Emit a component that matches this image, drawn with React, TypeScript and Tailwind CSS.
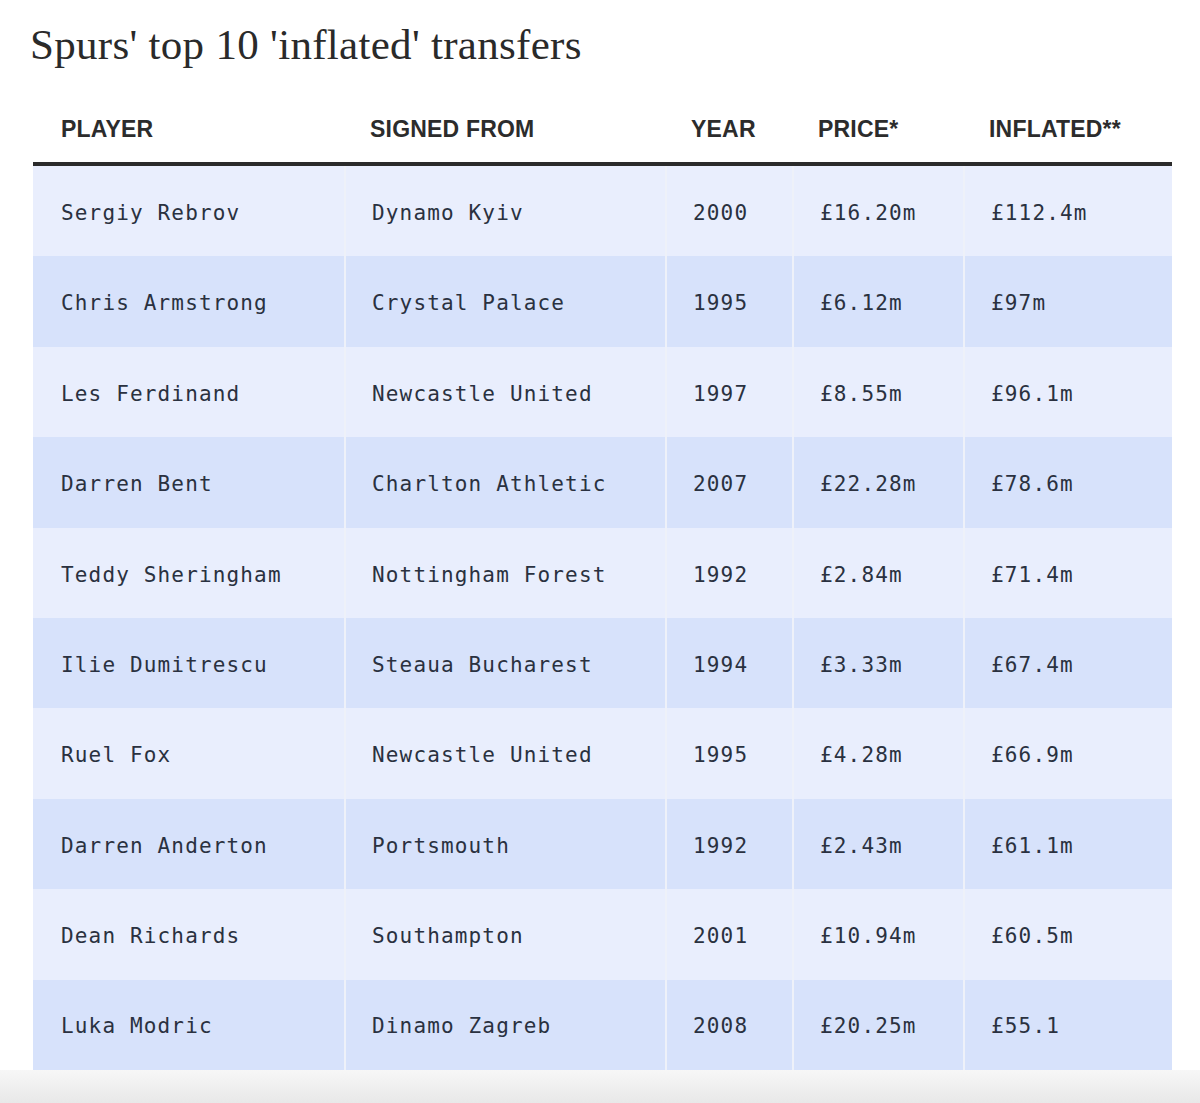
// App.tsx — Spurs' top 10 'inflated' transfers table

interface Transfer {
  player: string;
  from: string;
  year: string;
  price: string;
  inflated: string;
}

const transfers: Transfer[] = [
  { player: "Sergiy Rebrov", from: "Dynamo Kyiv", year: "2000", price: "£16.20m", inflated: "£112.4m" },
  { player: "Chris Armstrong", from: "Crystal Palace", year: "1995", price: "£6.12m", inflated: "£97m" },
  { player: "Les Ferdinand", from: "Newcastle United", year: "1997", price: "£8.55m", inflated: "£96.1m" },
  { player: "Darren Bent", from: "Charlton Athletic", year: "2007", price: "£22.28m", inflated: "£78.6m" },
  { player: "Teddy Sheringham", from: "Nottingham Forest", year: "1992", price: "£2.84m", inflated: "£71.4m" },
  { player: "Ilie Dumitrescu", from: "Steaua Bucharest", year: "1994", price: "£3.33m", inflated: "£67.4m" },
  { player: "Ruel Fox", from: "Newcastle United", year: "1995", price: "£4.28m", inflated: "£66.9m" },
  { player: "Darren Anderton", from: "Portsmouth", year: "1992", price: "£2.43m", inflated: "£61.1m" },
  { player: "Dean Richards", from: "Southampton", year: "2001", price: "£10.94m", inflated: "£60.5m" },
  { player: "Luka Modric", from: "Dinamo Zagreb", year: "2008", price: "£20.25m", inflated: "£55.1" },
];

const headers = ["PLAYER", "SIGNED FROM", "YEAR", "PRICE*", "INFLATED**"];

// columnas: 311 / 321 / 127 / 171 / 209
const gridCols = "grid grid-cols-[311px_321px_127px_171px_209px]";

function Cell({ children, first }: { children: React.ReactNode; first?: boolean }) {
  return (
    <div
      className={
        first
          ? "flex items-center h-full pl-[28px] pt-[5px]"
          : "flex items-center h-full pl-[26px] pt-[5px] border-l-2 border-[#eef1f9]"
      }
    >
      {children}
    </div>
  );
}

export default function App() {
  return (
    <div className="w-[1200px] h-[1103px] bg-white flex flex-col overflow-hidden">
      {/* ── Título ───────────────────────────── */}
      <h1
        className="pl-[30px] pt-[19px] h-[100px] text-[43px] leading-[52px] tracking-[0.3px] text-[#2a2a2a]"
        style={{ fontFamily: '"Liberation Serif", "Times New Roman", serif' }}
      >
        Spurs' top 10 'inflated' transfers
      </h1>

      <div className="pl-[33px] w-[1172px]">
        {/* ── Encabezado ───────────────────────── */}
        <div
          className={`${gridCols} h-[66px] border-b-4 border-[#2b2b2b] text-[23px] font-semibold text-[#2c2c2c] tracking-[0.2px]`}
          style={{ fontFamily: '"Liberation Sans", Arial, sans-serif' }}
        >
          {headers.map((h, i) => (
            <div key={h} className={i === 0 ? "pl-[28px] pt-[12px]" : "pl-[26px] pt-[12px]"}>
              {h}
            </div>
          ))}
        </div>

        {/* ── Filas ────────────────────────────── */}
        <div
          className="text-[21px] text-[#2a3140] tracking-[1.15px]"
          style={{ fontFamily: '"DejaVu Sans Mono", "Liberation Mono", monospace' }}
        >
          {transfers.map((t, i) => (
            <div
              key={t.player}
              className={`${gridCols} h-[90.4px] ${i % 2 === 0 ? "bg-[#e9eefd]" : "bg-[#d7e2fb]"}`}
            >
              <Cell first>{t.player}</Cell>
              <Cell>{t.from}</Cell>
              <Cell>{t.year}</Cell>
              <Cell>{t.price}</Cell>
              <Cell>{t.inflated}</Cell>
            </div>
          ))}
        </div>
      </div>

      {/* ── Pie gris ─────────────────────────── */}
      <div className="flex-1 bg-gradient-to-b from-[#f7f7f7] to-[#e8e8e8]" />
    </div>
  );
}
